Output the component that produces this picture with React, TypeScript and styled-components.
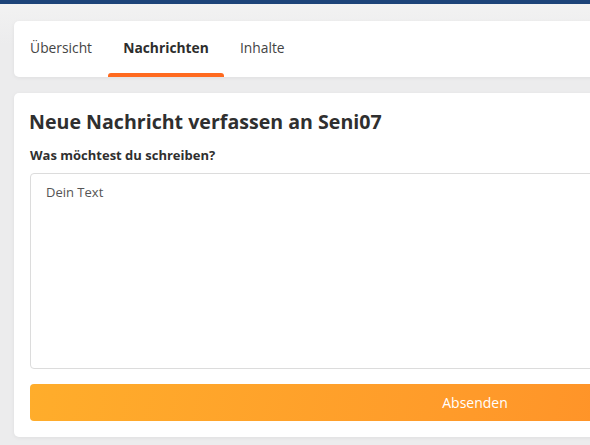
import React from "react";
import styled, { createGlobalStyle } from "styled-components";

const Global = createGlobalStyle`
  html, body { margin: 0; padding: 0; overflow: hidden; }
  body {
    background: #ececed;
    font-family: "Open Sans", "Noto Sans", sans-serif;
    color: #333;
  }
  * { box-sizing: border-box; }
`;

const TopBar = styled.div`
  height: 4px;
  background: #1d4479;
`;

const Page = styled.div`
  width: 950px;
  padding: 17px 14px 0 14px;
  display: flex;
  flex-direction: column;
  gap: 16px;
  background: linear-gradient(#f2f2f2, #ececed 40px);
  min-height: 441px;
`;

const Card = styled.div`
  background: #fff;
  border-radius: 5px;
  box-shadow: 0 1px 4px rgba(0, 0, 0, 0.06);
`;

const TabBar = styled(Card)`
  height: 56px;
  display: flex;
  align-items: stretch;
  padding: 0 0 0 0.5px;
`;

const Tab = styled.div<{ $active?: boolean }>`
  position: relative;
  display: flex;
  align-items: center;
  padding: 0 15.6px 4px;
  font-size: 13.8px;
  font-weight: ${(p) => (p.$active ? 700 : 400)};
  color: ${(p) => (p.$active ? "#2d2d2d" : "#444")};
  &::after {
    content: "";
    display: ${(p) => (p.$active ? "block" : "none")};
    position: absolute;
    left: 0;
    right: 0;
    bottom: 0;
    height: 4px;
    border-radius: 3px 3px 0 0;
    background: #ff6a1f;
  }
`;

const Composer = styled(Card)`
  padding: 15px 16px 16px 16px;
  display: flex;
  flex-direction: column;
`;

const Title = styled.h1`
  margin: 0 0 0 -1px;
  font-size: 19.6px;
  font-weight: 700;
  color: #2f2f2f;
  line-height: 28px;
`;

const Label = styled.label`
  margin-top: 10px;
  font-size: 13px;
  font-weight: 700;
  color: #2f2f2f;
  line-height: 18px;
`;

const TextArea = styled.textarea`
  margin-top: 9px;
  height: 196px;
  resize: none;
  border: 1px solid #dcdcdc;
  border-radius: 4px;
  padding: 9px 15px;
  font-family: "Open Sans", "Noto Sans", sans-serif;
  font-size: 13px;
  outline: none;
  &::placeholder { color: #555; }
`;

const Button = styled.button`
  margin-top: 15px;
  height: 37px;
  border: none;
  border-radius: 4px;
  background: linear-gradient(100deg, #ffad2b 0%, #ff9a2a 50%, #ff8424 100%);
  color: #fff;
  font-family: "Open Sans", "Noto Sans", sans-serif;
  font-size: 14px;
  font-weight: 400;
`;

export default function App() {
  return (
    <>
      <Global />
      <TopBar />
      <Page>
        <TabBar>
          <Tab>Übersicht</Tab>
          <Tab $active>Nachrichten</Tab>
          <Tab>Inhalte</Tab>
        </TabBar>
        <Composer>
          <Title>Neue Nachricht verfassen an Seni07</Title>
          <Label>Was möchtest du schreiben?</Label>
          <TextArea placeholder="Dein Text" />
          <Button>Absenden</Button>
        </Composer>
      </Page>
    </>
  );
}
